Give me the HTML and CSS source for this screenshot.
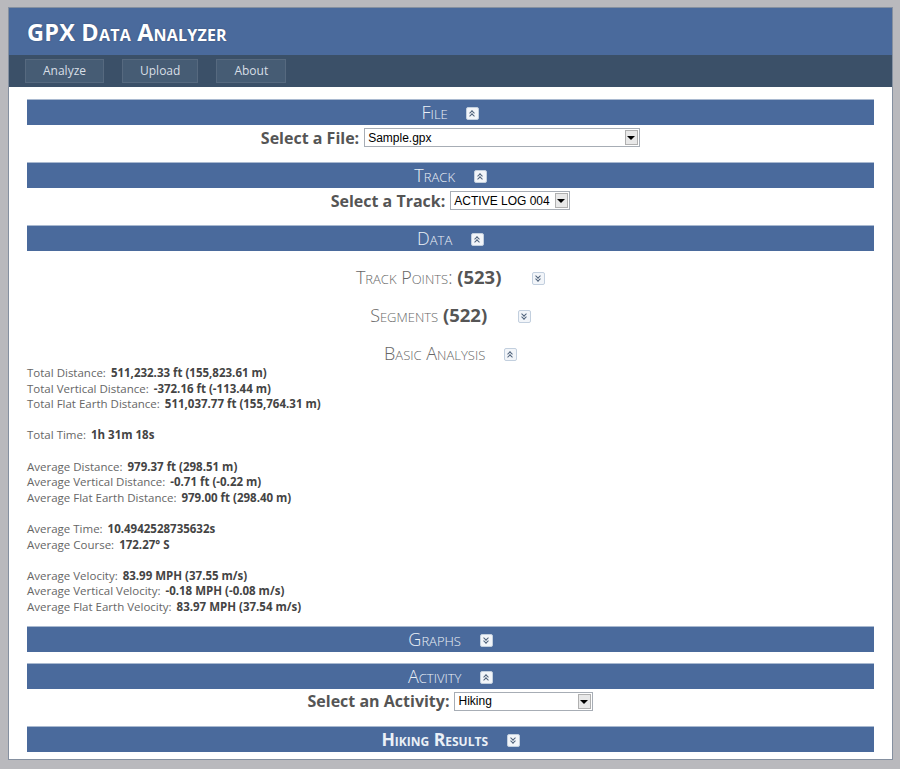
FILE: index.html
```html
<!DOCTYPE html>
<html lang="en">
<head>
    <meta charset="UTF-8">
    <title>GPX Data Analyzer</title>
    <link rel="stylesheet" href="styles.css">
</head>
<body>
<div class="page">

    <!-- Header -->
    <header class="masthead">
        <h1>GPX Data Analyzer</h1>
    </header>

    <!-- Navbar -->
    <nav class="menu">
        <a href="#" class="menu-btn">Analyze</a>
        <a href="#" class="menu-btn">Upload</a>
        <a href="#" class="menu-btn">About</a>
    </nav>

    <div class="content">

        <!-- File -->
        <div class="bar">File <span class="toggle up"></span></div>
        <div class="pick">
            <label for="file">Select a File:</label>
            <span class="dropdown w-file">
                <select id="file"><option>Sample.gpx</option></select>
            </span>
        </div>

        <!-- Track -->
        <div class="bar">Track <span class="toggle up"></span></div>
        <div class="pick">
            <label for="track">Select a Track:</label>
            <span class="dropdown w-track">
                <select id="track"><option>ACTIVE LOG 004</option></select>
            </span>
        </div>

        <!-- Data -->
        <div class="bar">Data <span class="toggle up"></span></div>
        <div class="subs">
            <div class="sub">Track Points: <b>(523)</b> <span class="toggle down"></span></div>
            <div class="sub">Segments <b>(522)</b> <span class="toggle down"></span></div>
            <div class="sub">Basic Analysis <span class="toggle up"></span></div>
        </div>

        <div class="stats">
            <div class="group">
                <p>Total Distance: <b>511,232.33 ft (155,823.61 m)</b></p>
                <p>Total Vertical Distance: <b>-372.16 ft (-113.44 m)</b></p>
                <p>Total Flat Earth Distance: <b>511,037.77 ft (155,764.31 m)</b></p>
            </div>
            <div class="group">
                <p>Total Time: <b>1h 31m 18s</b></p>
            </div>
            <div class="group">
                <p>Average Distance: <b>979.37 ft (298.51 m)</b></p>
                <p>Average Vertical Distance: <b>-0.71 ft (-0.22 m)</b></p>
                <p>Average Flat Earth Distance: <b>979.00 ft (298.40 m)</b></p>
            </div>
            <div class="group">
                <p>Average Time: <b>10.4942528735632s</b></p>
                <p>Average Course: <b>172.27&deg; S</b></p>
            </div>
            <div class="group">
                <p>Average Velocity: <b>83.99 MPH (37.55 m/s)</b></p>
                <p>Average Vertical Velocity: <b>-0.18 MPH (-0.08 m/s)</b></p>
                <p>Average Flat Earth Velocity: <b>83.97 MPH (37.54 m/s)</b></p>
            </div>
        </div>

        <!-- Graphs -->
        <div class="bar">Graphs <span class="toggle down"></span></div>

        <!-- Activity -->
        <div class="bar gap-small">Activity <span class="toggle up"></span></div>
        <div class="pick">
            <label for="activity">Select an Activity:</label>
            <span class="dropdown w-activity">
                <select id="activity"><option>Hiking</option></select>
            </span>
        </div>

        <div class="bar bold">Hiking Results <span class="toggle down"></span></div>
    </div>
</div>
</body>
</html>
```

FILE: styles.css
```css
/* Page frame */
body { margin: 0; background: #b9b9bd; font-family: "Open Sans", "DejaVu Sans", sans-serif; }
.page { margin: 7px 7px 0 8px; height: 751px; border: 1px solid #8590a0; background: #fff; overflow: hidden; }

/* Header */
.masthead { background: #4a6a9c; height: 47px; padding-left: 18px; display: flex; align-items: center; }
.masthead h1 { margin: 0; color: #fff; font-size: 23.5px; font-weight: bold; font-variant: small-caps; letter-spacing: 0.2px; text-shadow: 0 0 2px rgba(0, 0, 0, 0.25); }

/* Navbar */
.menu { background: #3b5068; height: 32px; display: flex; align-items: center; gap: 18px; padding-left: 16px; }
.menu-btn { height: 22px; line-height: 22px; padding: 0 17px; text-align: center; background: #465c74; border: 1px solid #56697f; color: #d8dfe6; font-size: 12px; text-decoration: none; }

/* Content */
.content { padding: 12px 18px 0 18px; }

.bar { height: 25px; line-height: 25px; border-top: 1px solid #a9b9d0; background: #4a6a9c; color: #eaf0f7; text-align: center; font-size: 18px; font-weight: 300; font-variant: small-caps; }
.bar.gap-small { margin-top: 11px; }
.bar.bold { font-weight: bold; font-size: 17.5px; margin-top: 12px; }
.bar .toggle { margin-left: 14px; }

.toggle { display: inline-block; width: 11px; height: 11px; border: 1px solid #c2cfde; border-radius: 2px; background: #f2f5f9; vertical-align: -1px; position: relative; }
.toggle::before, .toggle::after { content: ''; position: absolute; left: 3px; width: 3px; height: 3px; border-left: 1.5px solid #4c5f78; border-top: 1.5px solid #4c5f78; }
.toggle.up::before { top: 3px; transform: rotate(45deg); }
.toggle.up::after { top: 6px; transform: rotate(45deg); }
.toggle.down::before { top: 1px; transform: rotate(225deg); }
.toggle.down::after { top: 4px; transform: rotate(225deg); }

/* Select rows */
.pick { display: flex; justify-content: center; align-items: center; gap: 5px; height: 25px; margin-bottom: 12px; }
.pick label { color: #555; font-size: 16px; font-weight: bold; }
.dropdown { position: relative; display: inline-flex; }
.dropdown select { appearance: none; -webkit-appearance: none; height: 19px; padding: 0 0 0 3px; border: 1px solid #a7adb5; border-radius: 0; background: #fff; color: #000; font-family: "Liberation Sans", Arial, sans-serif; font-size: 12px; width: 100%; }
.dropdown::after { content: ''; position: absolute; right: 2px; top: 2px; width: 13px; height: 15px; background: #e8e8e8; border: 1px solid #b0b0b0; box-sizing: border-box; pointer-events: none; }
.dropdown::before { content: ''; position: absolute; right: 5px; top: 8px; border-left: 4px solid transparent; border-right: 4px solid transparent; border-top: 4px solid #000; z-index: 1; pointer-events: none; }
.w-file { width: 276px; }
.w-track { width: 120px; }
.w-activity { width: 139px; }

/* Data subsections */
.subs { margin-top: 7px; }
.sub { text-align: center; color: #666; font-size: 18px; font-weight: 300; font-variant: small-caps; height: 38px; line-height: 38px; }
.sub b { color: #555; font-variant: normal; font-size: 18.5px; font-weight: bold; margin-right: 12px; }
.sub .toggle { margin-left: 14px; }

/* Stats list */
.stats { font-size: 11.5px; color: #666; margin-top: -7px; margin-bottom: 11px; }
.stats p { margin: 0; line-height: 15.6px; }
.stats b { color: #444; margin-left: 2px; }
.group + .group { margin-top: 15.6px; }
```
